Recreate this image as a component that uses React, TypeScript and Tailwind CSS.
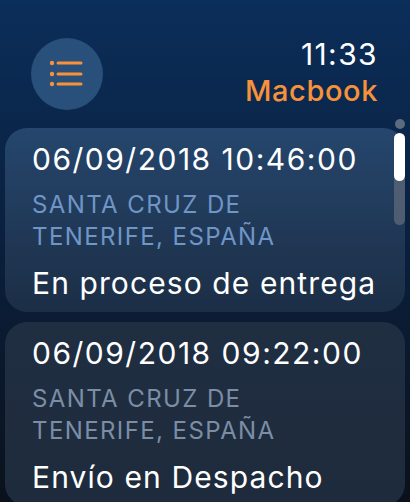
import React from "react";

const font = { fontFamily: "Inter, 'Noto Sans', sans-serif" };

function ListIcon() {
  return (
    <svg width="40" height="30" viewBox="0 0 40 30" fill="none">
      <circle cx="5" cy="4" r="2.2" fill="#f7923a" />
      <circle cx="5" cy="15" r="2.2" fill="#f7923a" />
      <circle cx="5" cy="25" r="2.2" fill="#f7923a" />
      <line x1="11" y1="4" x2="34" y2="4" stroke="#f7923a" strokeWidth="3" strokeLinecap="round" />
      <line x1="11" y1="15" x2="34" y2="15" stroke="#f7923a" strokeWidth="3" strokeLinecap="round" />
      <line x1="11" y1="25" x2="34" y2="25" stroke="#f7923a" strokeWidth="3" strokeLinecap="round" />
    </svg>
  );
}

function Card({
  date,
  place1,
  place2,
  status,
  first,
}: {
  date: string;
  place1: string;
  place2: string;
  status: string;
  first?: boolean;
}) {
  return (
    <div
      className={
        "rounded-[22px] pl-[27px] pr-3 pt-[11px] pb-[9px] " +
        (first
          ? "bg-gradient-to-b from-[#25466d] to-[#1c2e46]"
          : "bg-gradient-to-b from-[#202e42] to-[#1e2b3c]")
      }
    >
      <div className="text-[30px] leading-[40px] text-white tracking-[1.5px] whitespace-nowrap">{date}</div>
      <div
        className={
          "text-[24px] leading-[32px] mt-[10px] tracking-[1.4px] " +
          (first ? "text-[#6f96c6]" : "text-[#7b8ea6]")
        }
      >
        <div>{place1}</div>
        <div>{place2}</div>
      </div>
      <div className="text-[30px] leading-[40px] text-white mt-[10px] tracking-[1.1px] whitespace-nowrap">{status}</div>
    </div>
  );
}

export default function App() {
  return (
    <div
      className="relative w-[410px] h-[502px] overflow-hidden bg-gradient-to-b from-[#0b2e5a] via-[#0a1f3c] to-[#0a111c]"
      style={font}
    >
      <div className="flex justify-between items-start pl-[31px] pr-[32px] pt-[38px]">
        <div className="w-[72px] h-[72px] rounded-full bg-[#28507a] flex items-center justify-center">
          <ListIcon />
        </div>
        <div className="flex flex-col items-end">
          <div className="text-[30px] leading-[36px] text-white tracking-[1.4px] -mt-[2px]">11:33</div>
          <div className="text-[29px] leading-[38px] text-[#f7923a] font-medium tracking-[0.6px]">Macbook</div>
        </div>
      </div>
      <div className="flex flex-col gap-[10px] px-[5px] pt-[18px]">
        <Card
          first
          date="06/09/2018 10:46:00"
          place1="SANTA CRUZ DE"
          place2="TENERIFE, ESPAÑA"
          status="En proceso de entrega"
        />
        <Card
          date="06/09/2018 09:22:00"
          place1="SANTA CRUZ DE"
          place2="TENERIFE, ESPAÑA"
          status="Envío en Despacho"
        />
      </div>
      <div className="absolute left-[395px] top-[119px] w-[10px] h-[10px] rounded-full bg-[#5c6b80]" />
      <div className="absolute left-[394px] top-[133px] w-[11px] h-[92px] rounded-full bg-[#4e5d72]">
        <div className="w-[11px] h-[48px] rounded-full bg-white" />
      </div>
    </div>
  );
}
